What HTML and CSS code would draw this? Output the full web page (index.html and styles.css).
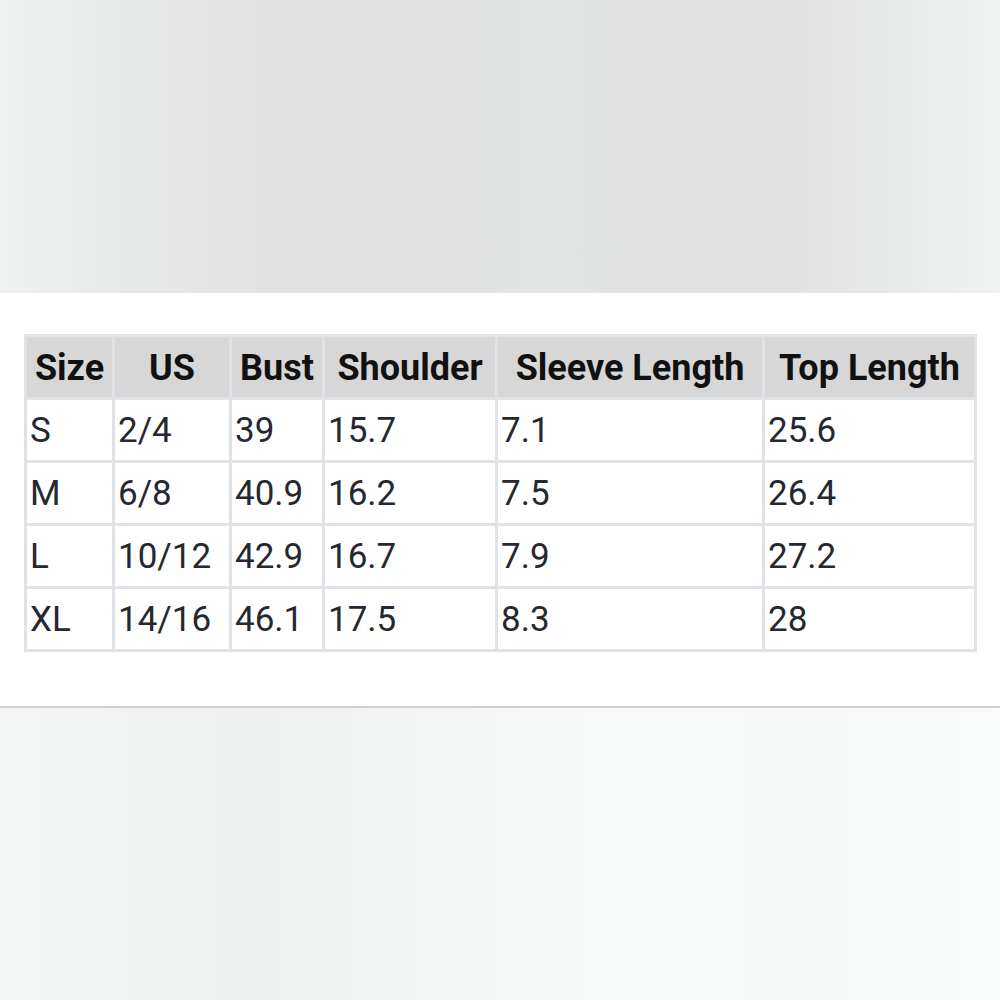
FILE: index.html
```html
<!DOCTYPE html>
<html>
<head>
<meta charset="utf-8">
<link rel="stylesheet" href="styles.css">
</head>
<body>
<div class="page">
  <div class="top-band"></div>
  <section class="panel">
    <table class="size-table">
      <thead>
        <tr>
          <th class="c1">Size</th>
          <th class="c2">US</th>
          <th class="c3">Bust</th>
          <th class="c4">Shoulder</th>
          <th class="c5">Sleeve Length</th>
          <th class="c6">Top Length</th>
        </tr>
      </thead>
      <tbody>
        <tr><td>S</td><td>2/4</td><td>39</td><td>15.7</td><td>7.1</td><td>25.6</td></tr>
        <tr><td>M</td><td>6/8</td><td>40.9</td><td>16.2</td><td>7.5</td><td>26.4</td></tr>
        <tr><td>L</td><td>10/12</td><td>42.9</td><td>16.7</td><td>7.9</td><td>27.2</td></tr>
        <tr><td>XL</td><td>14/16</td><td>46.1</td><td>17.5</td><td>8.3</td><td>28</td></tr>
      </tbody>
    </table>
  </section>
  <div class="divider"></div>
  <div class="bottom-band"></div>
</div>
</body>
</html>
```

FILE: styles.css
```css
html, body {
  margin: 0;
  padding: 0;
  background: #ffffff;
}

.page {
  width: 1000px;
  height: 1000px;
  display: flex;
  flex-direction: column;
  font-family: Roboto, "Liberation Sans", sans-serif;
}

.top-band {
  height: 293px;
  flex: none;
  background: linear-gradient(to right, #f0f1f1 0%, #e7e8e8 12%, #e1e1e2 30%, #e2e3e3 55%, #e1e1e1 78%, #e8e9e9 90%, #f1f2f2 100%);
}

.panel {
  height: 413px;
  flex: none;
  box-sizing: border-box;
  padding: 41px 0 0 24px;
  background: #ffffff;
}

.divider {
  height: 2px;
  flex: none;
  background: #cfd0d0;
}

.bottom-band {
  flex: 1;
  background: linear-gradient(to right, #f4f5f5 0%, #eff0f0 25%, #f4f5f5 45%, #f8f9f9 65%, #f6f7f7 80%, #f9fafa 100%);
}

.size-table {
  border-collapse: separate;
  border-spacing: 3px;
  background: #dfe3e7;
  table-layout: fixed;
  width: 953px;
}

.size-table th,
.size-table td {
  height: 60px;
  padding: 2px 3px 0;
  box-sizing: border-box;
  font-size: 35px;
  line-height: 40px;
  vertical-align: middle;
  white-space: nowrap;
  overflow: hidden;
}

.size-table th {
  background: #d7d7d7;
  color: #111111;
  font-size: 36px;
  font-weight: 700;
  text-align: center;
  padding: 2px 0 0;
}

.size-table td {
  background: #ffffff;
  color: #25282e;
  font-weight: 400;
  text-align: left;
}

.c1 { width: 85px; }
.c2 { width: 114px; }
.c3 { width: 90px; }
.c4 { width: 170px; }
.c5 { width: 264px; }
.c6 { width: 209px; }
```
